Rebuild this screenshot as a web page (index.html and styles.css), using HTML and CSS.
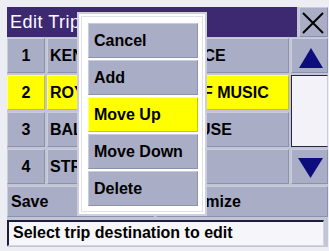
FILE: index.html
```html
<!DOCTYPE html>
<html>
<head>
<meta charset="utf-8">
<link rel="stylesheet" href="styles.css">
</head>
<body>
<div class="screen">
  <div class="header">
    <div class="title">Edit Trip</div>
    <div class="close cell">
      <svg width="29" height="30" viewBox="0 0 29 30"><path d="M4 6 L24 26 M24 6 L4 26" stroke="#000" stroke-width="2" fill="none"/></svg>
    </div>
  </div>
  <div class="list">
    <div class="cell num">1</div>
    <div class="cell name">KENNEDY RESIDENCE</div>
    <div class="cell arrow">
      <svg width="35" height="33" viewBox="0 0 35 33"><polygon points="7,29 19,9 31,29" fill="#0d0d7e"/></svg>
    </div>
    <div class="cell num sel">2</div>
    <div class="cell name sel">ROYAL COLLEGE OF MUSIC</div>
    <div class="track"></div>
    <div class="cell num">3</div>
    <div class="cell name">BALTIMORE ICEHOUSE</div>
    <div class="cell num">4</div>
    <div class="cell name">STRAND THEATRE</div>
    <div class="cell arrow">
      <svg width="35" height="33" viewBox="0 0 35 33"><polygon points="6,8 31,8 18.5,28" fill="#0d0d7e"/></svg>
    </div>
  </div>
  <div class="actions">
    <div class="cell btn save">Save</div>
    <div class="cell btn customize">Customize</div>
  </div>
  <div class="status">Select trip destination to edit</div>

  <div class="popup">
    <div class="cell pbtn">Cancel</div>
    <div class="cell pbtn">Add</div>
    <div class="cell pbtn sel">Move Up</div>
    <div class="cell pbtn">Move Down</div>
    <div class="cell pbtn">Delete</div>
  </div>
</div>
</body>
</html>
```

FILE: styles.css
```css
html, body {
  margin: 0;
  padding: 0;
}
body {
  background: #eceef3;
  font-family: "Liberation Sans", Arial, sans-serif;
  width: 329px;
  height: 251px;
  overflow: hidden;
}
.screen {
  position: relative;
  margin: 7px 0 0 7px;
  width: 321px;
  height: 240px;
  background: #c2c5d6;
  display: flex;
  flex-direction: column;
}
.cell {
  box-sizing: border-box;
  background: #a9adc6;
  border-top: 1px solid #c9ccdc;
  border-left: 1px solid #c9ccdc;
  border-right: 1px solid #8d91ab;
  border-bottom: 1px solid #8d91ab;
  color: #000;
  font-weight: bold;
  font-size: 16px;
  display: flex;
  align-items: center;
  white-space: nowrap;
  overflow: hidden;
}
.sel {
  background: #ffff00;
  border-top-color: #ffff80;
  border-left-color: #ffff80;
  border-right-color: #c8c800;
  border-bottom-color: #c8c800;
}
.header {
  display: flex;
  height: 30px;
  gap: 2px;
  margin-bottom: 1px;
}
.title {
  width: 290px;
  background: #3d2872;
  color: #fff;
  font-size: 18px;
  letter-spacing: 0.5px;
  line-height: 31px;
  padding-left: 3px;
  box-sizing: border-box;
}
.close {
  width: 29px;
  padding: 0;
  justify-content: center;
}
.close svg {
  display: block;
  margin: -1px;
}
.list {
  display: grid;
  grid-template-columns: 38px 242px 37px;
  grid-template-rows: repeat(4, 35px);
  gap: 2px;
}
.num {
  justify-content: center;
}
.name {
  padding-left: 2px;
}
.arrow {
  justify-content: center;
  padding: 0;
}
.arrow svg {
  display: block;
}
.track {
  grid-column: 3;
  grid-row: 2 / span 2;
  box-sizing: border-box;
  background: #f2f2f8;
  border: 1px solid #25254a;
  border-right-color: #c9ccdc;
}
.actions {
  display: flex;
  gap: 2px;
  height: 31px;
  margin-top: 2px;
}
.btn {
  padding-left: 3px;
}
.save {
  width: 147px;
}
.customize {
  flex: 1;
}
.status {
  margin-top: 3px;
  width: 317px;
  height: 26px;
  box-sizing: border-box;
  background: #f6f6fa;
  border-top: 2px solid #1e1e40;
  border-left: 2px solid #1e1e40;
  border-right: 1px solid #d2d4e0;
  border-bottom: 1px solid #d2d4e0;
  font-weight: bold;
  font-size: 16px;
  line-height: 22px;
  padding-left: 4px;
  white-space: nowrap;
}
.popup {
  position: absolute;
  left: 70px;
  top: 5px;
  width: 130px;
  height: 204px;
  box-sizing: border-box;
  background: #ffffff;
  border: 2px solid #cdcfe0;
  box-shadow: inset 0 0 0 2px #ffffff, inset 0 0 0 3px #dfe0ea;
  padding: 9px 7px 0 9px;
  display: flex;
  flex-direction: column;
  gap: 2px;
}
.pbtn {
  height: 35px;
  flex: none;
  padding-left: 5px;
}
```
